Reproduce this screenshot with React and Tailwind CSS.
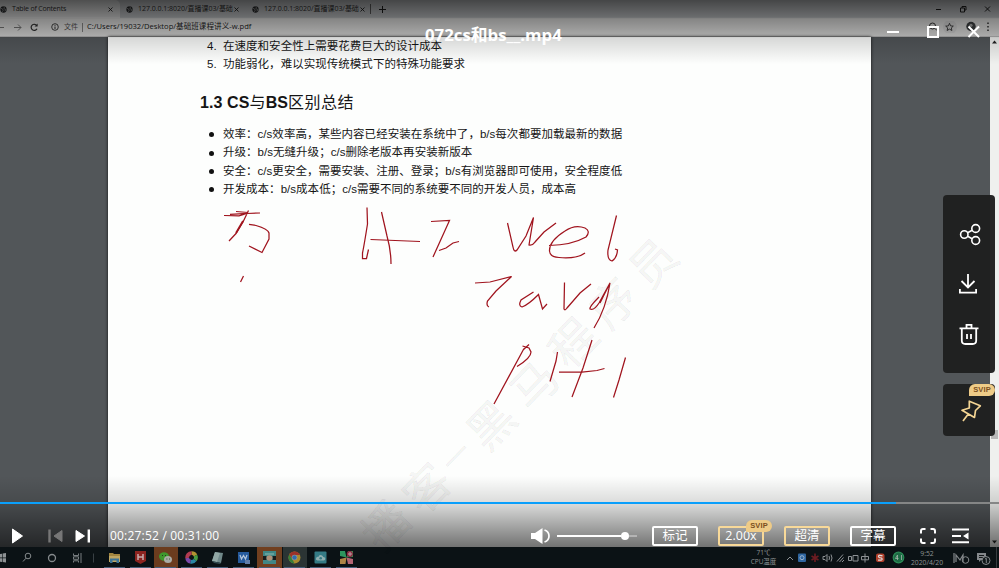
import React from "react";

const SANS = "font-['Open_Sans','Noto_Sans_CJK_SC',sans-serif]";
const DOC = "font-['Liberation_Sans','Noto_Sans_CJK_SC',sans-serif]";

function Globe() {
  return (
    <svg className="w-[7px] h-[7px] shrink-0" viewBox="0 0 8 8">
      <circle cx="4" cy="4" r="3.6" fill="#2e3032" />
      <path d="M1.2 2.6 L3 3.4 L3.6 5 L2.8 6.6 M4 .8 L5 2 L4.4 3 L6.6 4 L5.6 6" stroke="#a9abad" strokeWidth="1" fill="none" />
    </svg>
  );
}

function Cross() {
  return (
    <svg className="h-[5px] w-[5px] shrink-0" viewBox="0 0 6 6">
      <path d="M.6 .6 L5.4 5.4 M5.4 .6 L.6 5.4" stroke="#1c1c1c" strokeWidth="1" />
    </svg>
  );
}

function Tab({ title, active }) {
  return (
    <div className={`flex h-[18px] w-[126px] shrink-0 items-center pl-[6px] ${active ? "rounded-tr-[5px] bg-[#f4f5f5]" : ""}`}>
      <Globe />
      <span className={`ml-[5px] w-[92px] whitespace-nowrap text-[7px] leading-[18px] text-[#333] ${active ? "tracking-[-0.19px]" : "tracking-[-0.03px]"}`}>{title}</span>
      <span className="ml-[4px] flex"><Cross /></span>
    </div>
  );
}

function BrowserChrome() {
  return (
    <header className={`${SANS} shrink-0`}>
      <div className="flex h-[18px] items-center bg-[#d6d9dc]">
        <div className="-ml-[6px] flex h-[18px]">
          <Tab title="Table of Contents" active />
          <Tab title="127.0.0.1:8020/直播课03/基础" />
          <Tab title="127.0.0.1:8020/直播课03/基础" />
        </div>
        <div className="-ml-[2px] h-[10px] w-px bg-[#666]" />
        <svg className="ml-[8px] h-[7px] w-[7px]" viewBox="0 0 7 7"><path d="M3.5 0V7M0 3.5H7" stroke="#222" strokeWidth="1" /></svg>
        <svg className="mr-[8px] ml-auto h-[8px] w-[56px]" viewBox="0 0 56 8" fill="none" stroke="#222" strokeWidth="1">
          <path d="M1 4.5H6M25.5 3H29.5V7H25.5ZM27 3V1.5H31V5H29.5M50 1.5L55 6.5M55 1.5L50 6.5" />
        </svg>
      </div>
      <div className="flex h-[19px] items-center border-b border-[#bdbdbd] bg-[#e6e6e5]">
        <svg className="h-[9px] w-[40px]" viewBox="0 0 40 9" fill="none" stroke="#333" strokeWidth="1">
          <path d="M-3 4.5H4M14 4.5H21M18 1.5L21 4.5L18 7.5" stroke="#777" />
          <path d="M36.8 2.6A3.1 3.1 0 1 0 37 5.8" strokeWidth="1.2" />
          <path d="M37.6 .6V3.6H34.6Z" fill="#333" stroke="none" />
        </svg>
        <svg className="ml-[11px] h-[8px] w-[8px]" viewBox="0 0 8 8" fill="none" stroke="#333"><circle cx="4" cy="4" r="3.3" strokeWidth=".9" /><path d="M4 3.5V6M4 2V2.8" /></svg>
        <span className="ml-[5px] text-[7px] text-[#555]">文件</span>
        <span className="ml-[4px] h-[9px] w-px bg-[#888]" />
        <span className="ml-[4px] whitespace-nowrap text-[7.6px] text-[#1b1b1b]">C:/Users/19032/Desktop/基础班课程讲义-w.pdf</span>
        <svg className="mr-[5px] ml-auto h-[12px] w-[66px]" viewBox="0 0 66 12" fill="none" stroke="#333">
          <circle cx="4.5" cy="5" r="3" />
          <path d="M7 7.5L9 9.5" />
          <circle cx="22" cy="6" r="7" fill="#dadada" stroke="none" />
          <path d="M21.500 2.300L22.600 4.900L25.300 5.100L23.300 6.900L23.900 9.500L21.500 8.100L19.100 9.500L19.700 6.900L17.700 5.100L20.400 4.900Z" strokeWidth=".9" />
          <circle cx="43" cy="5.500" r="4.700" fill="#3e4143" stroke="none" />
          <circle cx="43" cy="4.300" r="1.600" fill="#aaa" stroke="none" />
          <path d="M60 1.500V3M60 5V6.500M60 8.500V10" strokeWidth="1.500" />
        </svg>
      </div>
    </header>
  );
}

function Handwriting() {
  return (
    <svg className="pointer-events-none absolute top-0 left-0 h-[568px] w-[999px]" viewBox="0 0 999 568" fill="none">
      <g className="font-['Noto_Sans_CJK_SC',sans-serif]" fill="#000" stroke="#000" strokeOpacity=".05" strokeWidth=".8" fillOpacity=".05" fontSize="46" textAnchor="middle">
        <text transform="translate(653 263) rotate(-46)" y="17">员</text>
        <text transform="translate(613 303) rotate(-46)" y="17">序</text>
        <text transform="translate(573 343) rotate(-46)" y="17">程</text>
        <text transform="translate(534 385) rotate(-46)" y="17">马</text>
        <text transform="translate(491 425) rotate(-46)" y="17">黑</text>
        <text transform="translate(457 457) rotate(-46)" y="10" fontSize="29">一</text>
        <text transform="translate(427 488) rotate(-46)" y="17">客</text>
        <text transform="translate(386 526) rotate(-46)" y="17">播</text>
      </g>
      <g stroke="#a0141e" strokeWidth="1.250">
        <path d="M224 215.500L239 215.800L247 213.500L260 213M236 211.500L248 212.500M230 214.300L248 213.300M248.500 210.500L243 222L236 233.500L229 241" />
        <path d="M243 221L236 233" strokeWidth="1.800" />
        <path d="M249 224.300L256 225.500Q268 229 269 233V239L262 252.500L249 246" />
        <path d="M243.500 276L240.500 282" />
        <path d="M367 207.500L367.500 224Q364 246 362.500 253V258.500H366.500L368.500 249.500M381.500 212L387 236Q391 250 391 264M370.500 239.500L420 241.500" />
        <path d="M431 221.500L449.500 220.500L433 257M439 250.500L446 248L453 243L459 241.500" />
        <path d="M507.500 223L513 247Q514 253 517 250L526 236L533.500 217.500L529 245Q532 246 535 242L544 232L556 223" />
        <path d="M549 245.500Q572 245 586 237Q591 231 585 228Q575 224 565 231Q549 241 549.500 251Q550 257 559 257.500Q577 259 585 253" />
        <path d="M616.500 215.500L608 250Q607 260 612 261Q617 258 617.500 250L615 249" />
        <path d="M475 283L490 282L511.500 276.500L496 291L487.500 301Q486 306 489 307" />
        <path d="M533.500 292L521 300Q518 306 522 307Q528 305 538.500 294.500L542.500 309L547 304" />
        <path d="M564.500 282.500L564 309Q565 311 567 308L580 293L591 284" />
        <path d="M599 297Q589 307 590 309Q594 311 599 303L610 283Q606 309 594 328M610 283L600 303" />
        <path d="M524 348.500L494 404M522.500 346L529 348L531 352Q531 358 517 366.500M529 344.500L523 350" />
        <path d="M557.500 352L556 361L550 381.500M592 340L583 368L572 397M559 372H582L597 370.500L604.500 368.500M625.500 357.500L619 380L613.500 397.500" />
      </g>
    </svg>
  );
}

function Bullet({ children }) {
  return (
    <li className="flex h-[18.3px] items-center">
      <span className="mr-[9.500px] ml-[8.500px] h-[5px] w-[5px] rounded-full bg-[#111]" />
      <span className="whitespace-nowrap tracking-[0.03px]">{children}</span>
    </li>
  );
}

function Numbered({ n, children }) {
  return (
    <li className="flex h-[18.3px] items-center">
      <span className="w-[16px] shrink-0">{n}.</span>
      <span className="whitespace-nowrap tracking-[0.03px]">{children}</span>
    </li>
  );
}

function Document() {
  return (
    <main className="flex min-h-0 flex-1 bg-[#525659]">
      <article className={`${DOC} ml-[108px] w-[763px] overflow-hidden bg-[#fdfefd] text-[11.500px] text-[#151515] shadow-[0_0_3px_#111]`}>
        <ol className="pl-[99px]">
          <Numbered n="4">在速度和安全性上需要花费巨大的设计成本</Numbered>
          <Numbered n="5">功能弱化，难以实现传统模式下的特殊功能要求</Numbered>
        </ol>
        <h2 className="mt-[17px] pl-[92px] text-[16px] leading-[24px] font-bold tracking-[0.1px] whitespace-nowrap">
          1.3 CS<span className="font-normal">与</span>BS<span className="font-normal tracking-[0.5px]">区别总结</span>
        </h2>
        <ul className="mt-[11px] pl-[92px]">
          <Bullet>效率：c/s效率高，某些内容已经安装在系统中了，b/s每次都要加载最新的数据</Bullet>
          <Bullet>升级：b/s无缝升级；c/s删除老版本再安装新版本</Bullet>
          <Bullet>安全：c/s更安全，需要安装、注册、登录；b/s有浏览器即可使用，安全程度低</Bullet>
          <Bullet>开发成本：b/s成本低；c/s需要不同的系统要不同的开发人员，成本高</Bullet>
        </ul>
      </article>
      <div className="ml-auto flex w-[9px] flex-col items-center justify-between bg-[#eff0ee] py-[3px]">
        <svg className="h-[4px] w-[5px]" viewBox="0 0 5 4"><path d="M0 3.500L2.500 .5L5 3.500Z" fill="#222" /></svg>
        <div className="mt-[386px] mb-auto h-[9px] w-[7px] bg-[#b9b9b9]" />
        <svg className="h-[4px] w-[5px]" viewBox="0 0 5 4"><path d="M0 .5L2.500 3.500L5 .5Z" fill="#222" /></svg>
      </div>
    </main>
  );
}

function TaskIcon({ children, bg = "" }) {
  return (
    <div className={`flex h-[21px] w-[24.800px] shrink-0 flex-col items-center justify-between ${bg}`}>
      <svg className="mt-[4px] h-[13px] w-[13px]" viewBox="0 0 13 13">{children}</svg>
      <span className="h-px w-[21px] bg-[#46607c]" />
    </div>
  );
}

function Taskbar() {
  return (
    <footer className={`${SANS} flex h-[21px] shrink-0 items-start overflow-hidden bg-[#0b1215] text-[#8e9294]`}>
      <svg className="h-[21px] w-[102px] shrink-0" viewBox="0 0 102 21" fill="none" stroke="#858a8c">
        <path d="M0 7L2 6.700V10.500H0ZM2.600 6.600L6 6V10.500H2.600ZM0 11.200H2V15L0 14.700ZM2.600 11.200H6V15.600L2.600 15.100Z" fill="#8e9294" stroke="none" />
        <circle cx="28" cy="9" r="2.800" /><path d="M26 11.200L23 14.500" />
        <circle cx="52" cy="11" r="3.500" strokeWidth="1.300" />
        <path d="M73.500 6.500V8.500H78.500V6.500M73.500 9.800H78.500V12.300H73.500ZM73.500 15.500V13.800H78.500V15.500M81 6V16" strokeWidth=".9" />
        <path d="M93.500 6.500V15.500" stroke="#394044" />
      </svg>
      <div className="flex gap-px">
        <TaskIcon><path d="M1 2H5L6 3H12V11H1Z" fill="#a28641" /><path d="M1 5H12V11H1Z" fill="#c0a763" /><path d="M2 12V7.500H11V12H8.500V9.500H4.500V12Z" fill="#3c7497" /></TaskIcon>
        <TaskIcon><path d="M1 0H12V10L6.500 13L1 10Z" fill="#8c2420" /><path d="M4 3V9M9 3V9M4 6H9" stroke="#c5aaaa" strokeWidth="1.500" /></TaskIcon>
        <TaskIcon bg="bg-[#6b3c1e]"><ellipse cx="5" cy="5.500" rx="5" ry="4.200" fill="#3f982d" /><ellipse cx="9" cy="8.500" rx="4" ry="3.500" fill="#a9aca5" /><path d="M3 4.500H4M6 4.500H7M7.500 8H8.300M10 8H10.800" stroke="#263a20" /></TaskIcon>
        <TaskIcon>
          <g fill="none" strokeWidth="3.800"><path d="M6.500 2.200A4.300 4.300 0 0 1 10.500 4.500" stroke="#b19331" /><path d="M10.500 4.500A4.300 4.300 0 0 1 10 9" stroke="#479c42" /><path d="M10 9A4.300 4.300 0 0 1 5.500 10.700" stroke="#2987a5" /><path d="M5.500 10.700A4.300 4.300 0 0 1 2.200 7" stroke="#7a49aa" /><path d="M2.200 7A4.300 4.300 0 0 1 6.500 2.200" stroke="#b13b51" /></g>
        </TaskIcon>
        <TaskIcon><path d="M4 1L12 2L10 12L1 10Z" fill="#70898a" /><path d="M4 1L9 2L6 11L1 10Z" fill="#92a8a5" /><path d="M1 10L10 12L9 13L3 12Z" fill="#334b50" /></TaskIcon>
        <TaskIcon><path d="M1 1H12V12H1Z" fill="#265b9d" /><path d="M3 4L4.500 8L6.500 4.500L8.500 8L10 4" stroke="#b4c6db" fill="none" strokeWidth="1.200" /><path d="M8 9H13V13H8Z" fill="#607da8" /></TaskIcon>
        <TaskIcon bg="bg-[#713f1f]"><path d="M0 0H13V13H0Z" fill="#3f8786" /><path d="M2 2H11V4H2Z" fill="#65a09b" /><path d="M0 5H3.500V9H0ZM9.500 5H13V9H9.500Z" fill="#171c1c" /><ellipse cx="6.500" cy="7" rx="3" ry="2.800" fill="#ae9077" /></TaskIcon>
        <TaskIcon bg="bg-[#2b3434]"><circle cx="6.500" cy="6.500" r="6" fill="#a88a2d" /><path d="M1.300 3.500A6 6 0 0 1 12 4H6.500L4 8Z" fill="#9d3128" /><path d="M1.300 3.500L5 9.500L6.500 12.500A6 6 0 0 1 1.300 3.500" fill="#367f3a" /><circle cx="6.500" cy="6.500" r="2.800" fill="#999" /><circle cx="6.500" cy="6.500" r="2.200" fill="#316cac" /></TaskIcon>
        <TaskIcon><rect x=".5" y=".5" width="12" height="12" rx="1" fill="#347b85" /><path d="M3.500 9.500Q1 9 2.300 6.800Q3 5.500 4.300 6Q5 3.500 7.500 4.200Q9 4.600 9.200 6Q12 6.500 11 8.700Q10.500 9.500 9.500 9.500Z" fill="#8fafb0" /><circle cx="6.700" cy="7.300" r="1.300" fill="#347b85" /></TaskIcon>
        <TaskIcon><path d="M0 0H5L6.500 6.500L0 5Z" fill="#2e965e" /><path d="M0 8L6.500 6.500L5.500 13H0Z" fill="#ad8445" /><path d="M6.500 6.500L13 8V13H8Z" fill="#b46574" /><path d="M6.500 6.500L8 0H13V6Z" fill="#3b8a50" /><circle cx="9.800" cy="3" r="3" fill="#8e253e" /><circle cx="10" cy="3" r="1.200" fill="none" stroke="#ccc" strokeWidth=".8" /></TaskIcon>
      </div>
      <div className="mt-[2px] ml-auto w-[29px] shrink-0 text-center text-[6.500px] leading-[8.500px] whitespace-nowrap">
        <div>71℃</div><div>CPU温度</div>
      </div>
      <svg className="ml-[7px] h-[21px] w-[124px] shrink-0" viewBox="784 547 124 21" fill="none" stroke="#8d9194">
        <path d="M786 560L789 557L792 560" />
        <rect x="797" y="553.500" width="8" height="8.500" rx="1" fill="#2f66a0" stroke="none" /><circle cx="801" cy="557.700" r="2" stroke="#9db5cc" />
        <path d="M814 553.500V562M810.500 556L817.500 560M817.500 556L810.500 560" stroke="#6e1c22" strokeWidth="1.600" />
        <path d="M822 556.500H824L826 554.500V561.500L824 559.500H822ZM828 556Q829 558 828 560M830 554.500Q832 558 830 561.500" />
        <path d="M836 561.500L842 554.500M838.500 562L842.500 557.500M841 562L843 560" />
        <path d="M847.500 556.500H850.500V560.500H847.500ZM852 555.500H857V561H852Z" />
        <path d="M860.500 556.500H867.500V559.800H860.500ZM864 553.500V562.500" />
        <rect x="875" y="553.500" width="8.500" height="8.500" rx="2" fill="#b0402c" stroke="none" /><path d="M881.500 555.800Q877 554.500 877.500 556.800Q878.500 558 880.500 558Q882 559.500 880 560.200H877" stroke="#ddd" strokeWidth="1.200" />
        <circle cx="897.500" cy="557.500" r="5.300" stroke="#2c8c57" strokeWidth="1.200" fill="#1d6a44" /><path d="M896.500 560V555L894.500 558.500H897.500M900.500 555V560" stroke="#a3b5aa" strokeWidth=".8" />
      </svg>
      <div className="mt-[2px] w-[36px] shrink-0 text-center text-[6.800px] leading-[9px] whitespace-nowrap">
        <div>9:52</div><div>2020/4/20</div>
      </div>
      <svg className="ml-[5px] h-[21px] w-[49px] shrink-0" viewBox="950 547 49 21" fill="none" stroke="#84888b">
        <path d="M954 553V563M956 562V555L960 560L963 555V562" strokeWidth="1.200" /><circle cx="965.500" cy="560" r="3.300" />
        <path d="M977 553H986V560H981L979 562V560H977Z" fill="#84888b" stroke="none" /><path d="M979 555.500H984M979 557.500H983" stroke="#15191b" /><circle cx="986" cy="560.500" r="4" fill="#11181a" /><path d="M985 559L986.300 558.300V563" />
        <path d="M996.500 547V568" stroke="#363c3f" />
      </svg>
    </footer>
  );
}

function TitleOverlay() {
  return (
    <div className="absolute inset-x-0 top-0 h-[64px] bg-[linear-gradient(to_bottom,rgba(0,0,0,0.68),rgba(0,0,0,0.5)_17px,rgba(0,0,0,0.42)_19px,rgba(0,0,0,0.26)_36px,rgba(0,0,0,0.15)_38px,rgba(0,0,0,0))]">
      <div className="flex items-start">
        <span className={`${SANS} mt-[23px] ml-[425px] text-[16.800px] leading-[24px] font-bold whitespace-nowrap text-white`}>072cs和bs__.mp4</span>
        <svg className="mt-[24px] mr-[18px] ml-auto h-[16px] w-[96px]" viewBox="885 24 96 16" fill="none" stroke="#fff" strokeWidth="2">
          <path d="M887 32H899" />
          <rect x="928" y="27" width="10" height="10" />
          <path d="M968.500 26.500L979 37M979 26.500L968.500 37" />
        </svg>
      </div>
    </div>
  );
}

function Svip() {
  return <span className="flex h-[12px] w-[26px] items-center justify-center rounded-[6px] rounded-bl-none bg-[#eecb87] font-['Liberation_Sans',sans-serif] text-[7.500px] font-bold tracking-[0.1px] text-[#7a4e20]">SVIP</span>;
}

function SidePanel() {
  return (
    <aside className="absolute top-[195px] right-[4px] flex w-[52px] flex-col gap-[11px]">
      <div className="flex h-[178px] flex-col items-center rounded-[4px] bg-[#1f1f1f]/97 pt-[28px] text-white">
        <svg className="mr-px ml-[2px] h-[23px] w-[22px]" viewBox="0 0 22 23" fill="none" stroke="currentColor" strokeWidth="1.600">
          <circle cx="5.300" cy="11.500" r="3.700" /><circle cx="16.700" cy="5.500" r="3.900" /><circle cx="16.700" cy="17.500" r="3.900" /><path d="M8.600 9.700L13.200 7.300M8.600 13.300L13.200 15.700" />
        </svg>
        <svg className="mt-[28px] mr-[2px] h-[21px] w-[20px]" viewBox="0 0 20 21" fill="none" stroke="currentColor" strokeWidth="1.800">
          <path d="M10 0V12.500M3.500 7L10 13.500L16.500 7M1.900 15V18.700H18.100V15" />
        </svg>
        <svg className="mt-[28px] h-[23px] w-[20px]" viewBox="0 0 20 23" fill="none" stroke="currentColor" strokeWidth="1.800">
          <path d="M.5 5.300H19.500M7.500 5V1.800H12.500V5M2.800 5.500V17.500Q2.800 21 6.300 21H13.700Q17.200 21 17.200 17.500V5.500M8 11V16M12 11V16" />
        </svg>
      </div>
      <div className="flex h-[52px] flex-col rounded-[4px] bg-[#1f1f1f]/97">
        <div className="self-end"><Svip /></div>
        <svg className="mt-[3px] ml-[16px] h-[25px] w-[24px]" viewBox="0 0 24 25" fill="none" stroke="#f4d594" strokeWidth="1.700" strokeLinejoin="round">
          <path d="M10.300 2.200L21.300 6.800L16.500 11.500L15.500 18.500L3 11.300L10.300 9ZM9.300 15L4 22" />
        </svg>
      </div>
    </aside>
  );
}

function Pill({ children, gold, badge }) {
  return (
    <div className={`relative flex h-[20px] w-[46px] items-center justify-center rounded-[2px] border-2 text-[12.500px] leading-[16px] text-white ${gold ? "border-[#f8d999]" : "border-white"}`}>
      {children}
      {badge && <div className="absolute -top-[8px] -right-[10px]"><Svip /></div>}
    </div>
  );
}

function Controls() {
  return (
    <section className={`${SANS} absolute inset-x-0 top-[476px] h-[71px] bg-[linear-gradient(to_bottom,rgba(0,0,0,0),rgba(0,0,0,0.14)_28px,rgba(0,0,0,0.55))] pt-[26px]`}>
      <div className="h-[2px] w-full bg-[#858686]"><div className="h-full w-[896px] bg-[#0a9ffb]" /></div>
      <div className="mt-[22px] flex h-[20px] items-center">
        <svg className="h-[18px] w-[92px] shrink-0" viewBox="0 527 92 18">
          <path d="M12.500 529L22.500 536L12.500 543Z" fill="#fff" stroke="#fff" strokeLinejoin="round" />
          <g fill="#777" stroke="#777"><path d="M49.500 529.500V542.500" strokeWidth="2.400" /><path d="M62 530.500V541.500L54 536Z" strokeLinejoin="round" /></g>
          <g fill="#fff" stroke="#fff"><path d="M88.800 529.500V542.500" strokeWidth="2.400" /><path d="M76 530.500V541.500L84.500 536Z" strokeLinejoin="round" /></g>
        </svg>
        <span className="ml-[18px] w-[120px] text-[12px] font-medium tracking-[0.2px] whitespace-nowrap text-white">00:27:52 / 00:31:00</span>
        <svg className="ml-[300px] h-[18px] w-[21px]" viewBox="530 527 21 18">
          <path d="M531 533H535L542.500 528V544L535 539H531Z" fill="#fff" /><path d="M544.500 530Q549 531.500 549 536Q549 540.500 544.500 542" fill="none" stroke="#fff" strokeWidth="1.700" />
        </svg>
        <div className="ml-[6px] flex h-[8px] w-[80px] items-center">
          <div className="h-[2px] w-[64px] bg-white" /><div className="h-[8px] w-[8px] rounded-full bg-white" /><div className="h-[2px] w-[8px] bg-[#b4b4b4]" />
        </div>
        <div className="ml-[15px] flex gap-5">
          <Pill>标记</Pill>
          <Pill gold badge>2.00x</Pill>
          <Pill gold>超清</Pill>
          <Pill>字幕</Pill>
        </div>
        <svg className="ml-[24px] h-[18px] w-[50px]" viewBox="920 527 50 18" fill="none" stroke="#fff" strokeWidth="2">
          <path d="M921 533.500V531Q921 529 923 529H925.500M930.500 529H933Q935 529 935 531V533.500M935 538.500V541Q935 543 933 543H930.500M925.500 543H923Q921 543 921 541V538.500" />
          <path d="M952 529.500H969M952 536H961M952 542.300H969" />
          <path d="M968.500 532.500V539.500L963 536Z" fill="#fff" stroke="none" />
        </svg>
      </div>
    </section>
  );
}

export default function App() {
  return (
    <div className="relative flex h-[568px] w-[999px] flex-col overflow-hidden bg-[#525659]">
      <BrowserChrome />
      <Document />
      <Taskbar />
      <Handwriting />
      <TitleOverlay />
      <Controls />
      <SidePanel />
    </div>
  );
}
